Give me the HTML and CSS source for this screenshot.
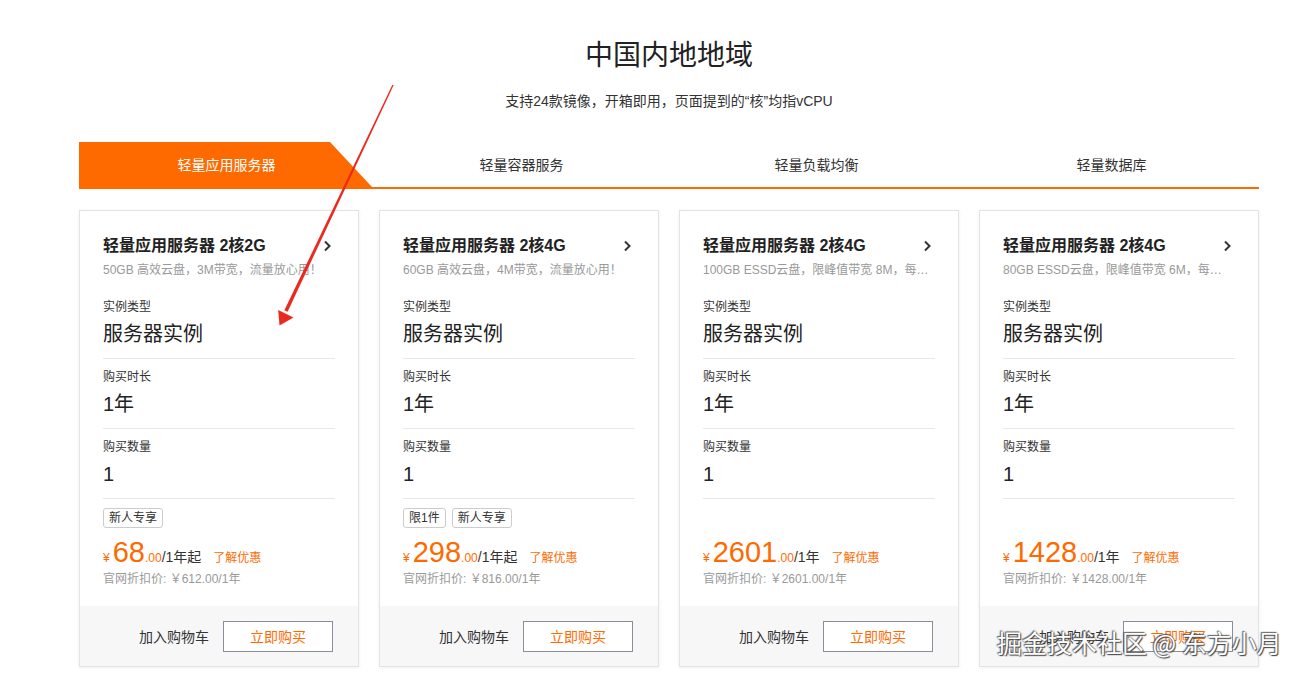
FILE: index.html
```html
<!DOCTYPE html>
<html lang="zh-CN">
<head>
    <meta charset="UTF-8">
    <meta name="viewport" content="width=device-width, initial-scale=1.0">
    <title>中国内地地域</title>
    <link rel="stylesheet" href="styles.css">
</head>
<body>
    <div class="page">
        <div class="region-head">
            <h1>中国内地地域</h1>
            <p>支持24款镜像，开箱即用，页面提到的“核”均指vCPU</p>
        </div>

        <div class="tabs">
            <div class="tab active">轻量应用服务器</div>
            <div class="tab">轻量容器服务</div>
            <div class="tab">轻量负载均衡</div>
            <div class="tab">轻量数据库</div>
        </div>

        <div class="cards">
            <div class="card">
                <div class="card-body">
                    <div class="card-title">
                        <span>轻量应用服务器 2核2G</span>
                        <svg width="8" height="12" viewBox="0 0 8 12"><path d="M2 1.5 6.5 6 2 10.5" fill="none" stroke="#333" stroke-width="2"/></svg>
                    </div>
                    <div class="card-desc">50GB 高效云盘，3M带宽，流量放心用！</div>
                    <div class="specs">
                        <div class="spec">
                            <div class="spec-label">实例类型</div>
                            <div class="spec-value">服务器实例</div>
                        </div>
                        <div class="spec">
                            <div class="spec-label">购买时长</div>
                            <div class="spec-value">1年</div>
                        </div>
                        <div class="spec">
                            <div class="spec-label">购买数量</div>
                            <div class="spec-value">1</div>
                        </div>
                    </div>
                    <div class="tags">
                        <span class="tag">新人专享</span>
                    </div>
                    <div class="price">
                        <span class="yen">¥</span><span class="num">68</span><span class="dec">.00</span><span class="unit">/1年起</span><a class="promo">了解优惠</a>
                    </div>
                    <div class="orig">官网折扣价: ￥612.00/1年</div>
                </div>
                <div class="card-foot">
                    <span class="cart">加入购物车</span>
                    <button class="buy">立即购买</button>
                </div>
            </div>

            <div class="card">
                <div class="card-body">
                    <div class="card-title">
                        <span>轻量应用服务器 2核4G</span>
                        <svg width="8" height="12" viewBox="0 0 8 12"><path d="M2 1.5 6.5 6 2 10.5" fill="none" stroke="#333" stroke-width="2"/></svg>
                    </div>
                    <div class="card-desc">60GB 高效云盘，4M带宽，流量放心用！</div>
                    <div class="specs">
                        <div class="spec">
                            <div class="spec-label">实例类型</div>
                            <div class="spec-value">服务器实例</div>
                        </div>
                        <div class="spec">
                            <div class="spec-label">购买时长</div>
                            <div class="spec-value">1年</div>
                        </div>
                        <div class="spec">
                            <div class="spec-label">购买数量</div>
                            <div class="spec-value">1</div>
                        </div>
                    </div>
                    <div class="tags">
                        <span class="tag">限1件</span>
                        <span class="tag">新人专享</span>
                    </div>
                    <div class="price">
                        <span class="yen">¥</span><span class="num">298</span><span class="dec">.00</span><span class="unit">/1年起</span><a class="promo">了解优惠</a>
                    </div>
                    <div class="orig">官网折扣价: ￥816.00/1年</div>
                </div>
                <div class="card-foot">
                    <span class="cart">加入购物车</span>
                    <button class="buy">立即购买</button>
                </div>
            </div>

            <div class="card">
                <div class="card-body">
                    <div class="card-title">
                        <span>轻量应用服务器 2核4G</span>
                        <svg width="8" height="12" viewBox="0 0 8 12"><path d="M2 1.5 6.5 6 2 10.5" fill="none" stroke="#333" stroke-width="2"/></svg>
                    </div>
                    <div class="card-desc">100GB ESSD云盘，限峰值带宽 8M，每月流量包 1024GB</div>
                    <div class="specs">
                        <div class="spec">
                            <div class="spec-label">实例类型</div>
                            <div class="spec-value">服务器实例</div>
                        </div>
                        <div class="spec">
                            <div class="spec-label">购买时长</div>
                            <div class="spec-value">1年</div>
                        </div>
                        <div class="spec">
                            <div class="spec-label">购买数量</div>
                            <div class="spec-value">1</div>
                        </div>
                    </div>
                    <div class="tags"></div>
                    <div class="price">
                        <span class="yen">¥</span><span class="num">2601</span><span class="dec">.00</span><span class="unit">/1年</span><a class="promo">了解优惠</a>
                    </div>
                    <div class="orig">官网折扣价: ￥2601.00/1年</div>
                </div>
                <div class="card-foot">
                    <span class="cart">加入购物车</span>
                    <button class="buy">立即购买</button>
                </div>
            </div>

            <div class="card">
                <div class="card-body">
                    <div class="card-title">
                        <span>轻量应用服务器 2核4G</span>
                        <svg width="8" height="12" viewBox="0 0 8 12"><path d="M2 1.5 6.5 6 2 10.5" fill="none" stroke="#333" stroke-width="2"/></svg>
                    </div>
                    <div class="card-desc short">80GB ESSD云盘，限峰值带宽 6M，每月流量包 1024GB</div>
                    <div class="specs">
                        <div class="spec">
                            <div class="spec-label">实例类型</div>
                            <div class="spec-value">服务器实例</div>
                        </div>
                        <div class="spec">
                            <div class="spec-label">购买时长</div>
                            <div class="spec-value">1年</div>
                        </div>
                        <div class="spec">
                            <div class="spec-label">购买数量</div>
                            <div class="spec-value">1</div>
                        </div>
                    </div>
                    <div class="tags"></div>
                    <div class="price">
                        <span class="yen">¥</span><span class="num">1428</span><span class="dec">.00</span><span class="unit">/1年</span><a class="promo">了解优惠</a>
                    </div>
                    <div class="orig">官网折扣价: ￥1428.00/1年</div>
                </div>
                <div class="card-foot">
                    <span class="cart">加入购物车</span>
                    <button class="buy">立即购买</button>
                </div>
            </div>
        </div>
    </div>

    <!-- red pointer drawn over the page -->
    <svg class="pointer" width="1303" height="678" viewBox="0 0 1303 678">
        <polygon points="393.6,85.2 392.4,84.8 284.4,310.2 287.6,311.8" fill="#ea2a1f"/>
        <polygon points="279.5,325.5 278.2,310 293.5,317.5" fill="#ea2a1f"/>
    </svg>

    <div class="watermark">掘金技术社区 @ 东方小月</div>
</body>
</html>
```

FILE: styles.css
```css
* {
    box-sizing: border-box;
}
body {
    margin: 0;
    font-family: "Liberation Sans", "Noto Sans CJK SC", sans-serif;
    color: #333;
    background: #fff;
    position: relative;
    overflow: hidden;
    height: 678px;
}
.page {
    width: 1180px;
    margin-left: 79px;
}
.region-head {
    text-align: center;
    padding-top: 36px;
}
.region-head h1 {
    margin: 0;
    font-size: 28px;
    line-height: 40px;
    font-weight: normal;
    color: #222;
}
.region-head p {
    margin: 15px 0 0;
    font-size: 14px;
    line-height: 20px;
}
.tabs {
    display: grid;
    grid-template-columns: repeat(4, 1fr);
    margin-top: 31px;
    border-bottom: 2px solid #ff6a00;
}
.tab {
    height: 45px;
    line-height: 47px;
    text-align: center;
    font-size: 14px;
    color: #333;
}
.tab.active {
    color: #fff;
    background: #ff6a00;
    clip-path: polygon(0 0, 251px 0, 293px 100%, 0 100%);
}
.cards {
    display: grid;
    grid-template-columns: repeat(4, 280px);
    gap: 20px;
    margin-top: 21px;
}
.card {
    height: 457px;
    border: 1px solid #e3e3e3;
    box-shadow: 0 1px 4px rgba(0, 0, 0, 0.06);
    display: flex;
    flex-direction: column;
    background: #fff;
}
.card-body {
    padding: 23px 23px 0;
}
.card-title {
    display: flex;
    justify-content: space-between;
    align-items: center;
    font-size: 16px;
    font-weight: bold;
    line-height: 24px;
    color: #222;
}
.card-title svg {
    margin-right: 4px;
}
.card-desc {
    margin-top: 3px;
    font-size: 12px;
    line-height: 18px;
    color: #999;
    white-space: nowrap;
    overflow: hidden;
    text-overflow: ellipsis;
}
.card-desc.short {
    width: 222px;
}
.specs {
    margin-top: 10px;
}
.spec {
    padding: 9px 0;
    border-bottom: 1px solid #e8e8e8;
}
.spec-label {
    font-size: 12px;
    line-height: 18px;
}
.spec-value {
    margin-top: 3px;
    font-size: 20px;
    line-height: 30px;
    color: #222;
}
.tags {
    display: flex;
    gap: 6px;
    height: 20px;
    margin-top: 9px;
}
.tag {
    font-size: 12px;
    line-height: 18px;
    padding: 0 5px;
    border: 1px solid #ccc;
    border-radius: 3px;
}
.price {
    margin-top: 8px;
    height: 32px;
    display: flex;
    align-items: baseline;
    color: #ff6a00;
}
.price .yen {
    font-size: 12px;
    margin-right: 3px;
}
.price .num {
    font-size: 29px;
    line-height: 32px;
}
.price .dec {
    font-size: 12px;
}
.price .unit {
    font-size: 14px;
    color: #333;
}
.price .promo {
    font-size: 12px;
    margin-left: 12px;
}
.orig {
    margin-top: 2px;
    font-size: 12px;
    line-height: 18px;
    color: #999;
}
.card-foot {
    margin-top: auto;
    height: 60px;
    background: #f7f7f8;
    display: flex;
    align-items: center;
    justify-content: flex-end;
    gap: 14px;
    padding-right: 25px;
}
.cart {
    font-size: 14px;
    color: #333;
}
.buy {
    width: 110px;
    height: 31px;
    border: 1px solid #8a8e99;
    background: #fff;
    color: #ff6a00;
    font-family: inherit;
    font-size: 14px;
}
.pointer {
    position: absolute;
    left: 0;
    top: 0;
    pointer-events: none;
}
.watermark {
    position: absolute;
    left: 997px;
    top: 627px;
    font-family: "Noto Sans CJK SC", sans-serif;
    font-size: 25px;
    line-height: 30px;
    color: #fff;
    text-shadow: 1px 1px 1px #444, -1px -1px 1px rgba(60, 60, 60, 0.7), 0 0 2px #555;
    white-space: nowrap;
}
```
